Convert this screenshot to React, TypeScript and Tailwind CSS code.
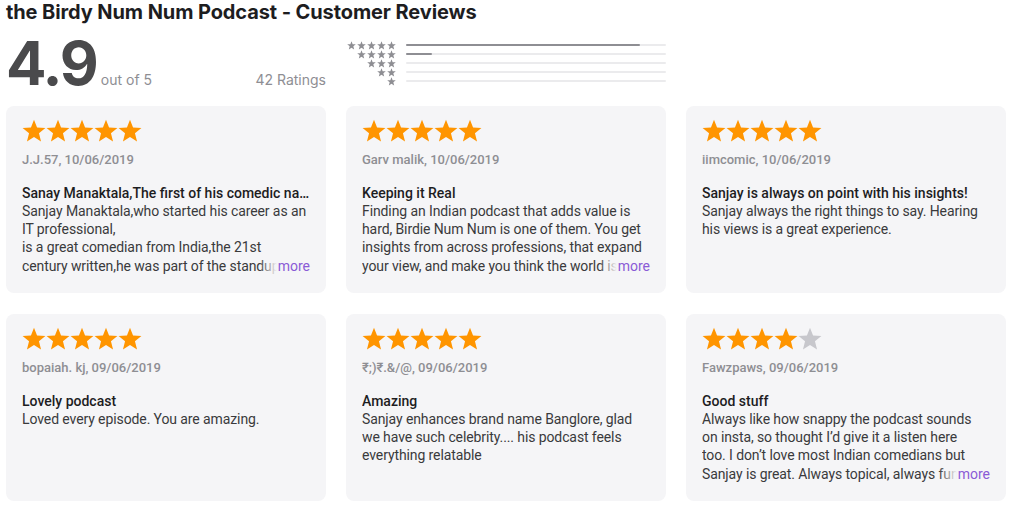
import React from "react";

const STAR = "M12 0.7 L15.06 8.49 L23.41 8.99 L16.95 14.31 L19.05 22.41 L12 17.9 L4.95 22.41 L7.05 14.31 L0.59 8.99 L8.94 8.49 Z";

function Star({ className, color }: { className: string; color: string }) {
  return (
    <svg viewBox="0 0 24 24" className={className}>
      <path d={STAR} fill={color} />
    </svg>
  );
}

type Review = {
  rating: number;
  author: string;
  date: string;
  title: string;
  body: string;
  more?: boolean;
};

const reviews: Review[] = [
  {
    rating: 5,
    author: "J.J.57",
    date: "10/06/2019",
    title: "Sanay Manaktala,The first of his comedic nature in India",
    body: "Sanjay Manaktala,who started his career as an IT professional,\nis a great comedian from India,the 21st century written,he was part of the standup comedy scene in Bangalore and has been performing for years.",
    more: true,
  },
  {
    rating: 5,
    author: "Garv malik",
    date: "10/06/2019",
    title: "Keeping it Real",
    body: "Finding an Indian podcast that adds value is hard, Birdie Num Num is one of them. You get insights from across professions, that expand your view, and make you think the world is a bigger place.",
    more: true,
  },
  {
    rating: 5,
    author: "iimcomic",
    date: "10/06/2019",
    title: "Sanjay is always on point with his insights!",
    body: "Sanjay always the right things to say. Hearing his views is a great experience.",
  },
  {
    rating: 5,
    author: "bopaiah. kj",
    date: "09/06/2019",
    title: "Lovely podcast",
    body: "Loved every episode. You are amazing.",
  },
  {
    rating: 5,
    author: "₹;)₹.&/@",
    date: "09/06/2019",
    title: "Amazing",
    body: "Sanjay enhances brand name Banglore, glad we have such celebrity.... his podcast feels everything relatable",
  },
  {
    rating: 4,
    author: "Fawzpaws",
    date: "09/06/2019",
    title: "Good stuff",
    body: "Always like how snappy the podcast sounds on insta, so thought I’d give it a listen here\ntoo. I don’t love most Indian comedians but Sanjay is great. Always topical, always funny and always worth a listen.",
    more: true,
  },
];

const histogram = [
  { stars: 5, pct: 90 },
  { stars: 4, pct: 10 },
  { stars: 3, pct: 0 },
  { stars: 2, pct: 0 },
  { stars: 1, pct: 0 },
];

function ReviewCard({ r }: { r: Review }) {
  return (
    <div className="h-[187px] rounded-[8px] bg-[#f5f5f7] px-[16px] pt-[13px] font-['Roboto',sans-serif]">
      <div className="flex h-[24px]">
        {[0, 1, 2, 3, 4].map((i) => (
          <Star key={i} className="h-[24px] w-[24px]" color={i < r.rating ? "#ff9500" : "#c7c7cc"} />
        ))}
      </div>
      <div className="mt-[9px] text-[13px] leading-[16px] font-medium text-[#8e8e93]">
        {r.author}, {r.date}
      </div>
      <div className="mt-[15.5px] truncate text-[14px] leading-[18.3px] font-medium text-[#1d1d1f]">
        {r.title}
      </div>
      <div className="relative">
        <p className="line-clamp-4 whitespace-pre-line text-[14px] leading-[18.3px] tracking-[-0.1px] text-[#3a3a3c]">{r.body}</p>
        {r.more && (
          <span className="absolute right-0 bottom-0 flex text-[14px] leading-[18.3px]">
            <span className="w-[18px] bg-linear-to-r from-[#f5f5f700] to-[#f5f5f7]" />
            <span className="bg-[#f5f5f7] pl-[1px] text-[#8a5bd6]">more</span>
          </span>
        )}
      </div>
    </div>
  );
}

export default function App() {
  return (
    <div className="h-[514px] w-[1024px] overflow-hidden bg-white px-[6px] font-['Inter',sans-serif]">
      <h1 className="text-[20px] leading-[24px] font-bold tracking-[-0.1px] text-[#1d1d1f]">
        the Birdy Num Num Podcast - Customer Reviews
      </h1>
      <div className="mt-[9px] flex h-[60px] gap-[20px]">
        <div className="flex w-[320px] items-baseline">
          <span className="text-[60px] leading-[60px] font-bold tracking-[-2px] text-[#4a4a4c]">4.9</span>
          <span className="ml-[4px] text-[14px] text-[#8e8e93]">out of 5</span>
          <span className="ml-auto text-[14px] text-[#8e8e93]">42 Ratings</span>
        </div>
        <div className="flex w-[320px] flex-col justify-center">
          {histogram.map((h) => (
            <div key={h.stars} className="flex h-[9px] items-center">
              <div className="flex w-[50px] justify-end gap-[1px]">
                {Array.from({ length: h.stars }).map((_, i) => (
                  <Star key={i} className="h-[9px] w-[9px]" color="#8e8e93" />
                ))}
              </div>
              <div className="ml-[10px] h-[2px] flex-1 rounded-full bg-[#ebebed]">
                <div className="h-[2px] rounded-full bg-[#8e8e93]" style={{ width: `${h.pct}%` }} />
              </div>
            </div>
          ))}
        </div>
      </div>
      <div className="mt-[13px] grid grid-cols-[320px_320px_320px] gap-x-[20px] gap-y-[21px]">
        {reviews.map((r, i) => (
          <ReviewCard key={i} r={r} />
        ))}
      </div>
    </div>
  );
}
